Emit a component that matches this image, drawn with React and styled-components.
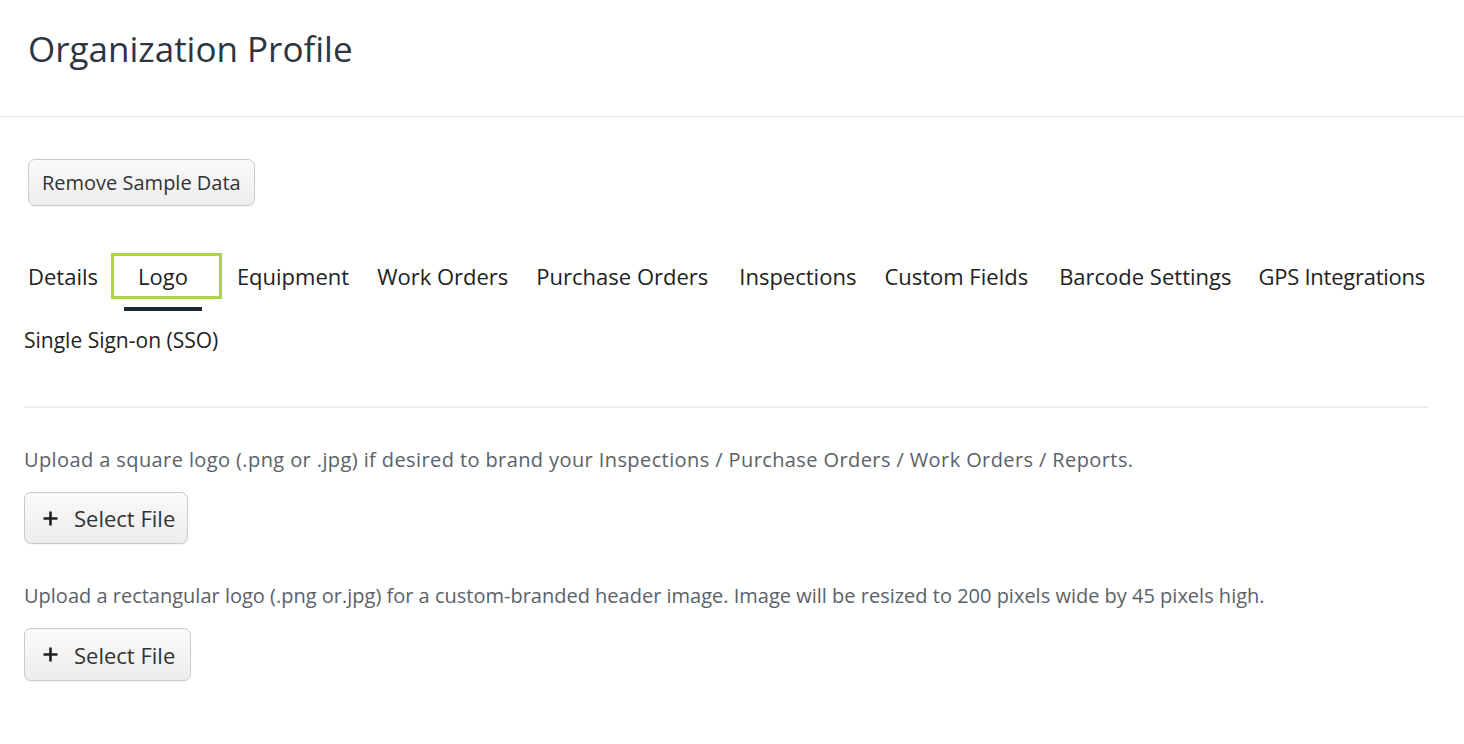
import React from 'react';
import styled, { createGlobalStyle } from 'styled-components';

const GlobalStyle = createGlobalStyle`
  html, body {
    margin: 0;
    padding: 0;
    background: #ffffff;
    font-family: "Open Sans", "Noto Sans", Arial, sans-serif;
  }
`;

const Page = styled.div`
  width: 1464px;
  min-height: 744px;
  background: #fff;
`;

const Header = styled.header`
  height: 117px;
  border-bottom: 1px solid #e3e4e6;
  display: flex;
  align-items: center;
  padding: 0 28px 20px;
  box-sizing: border-box;

  h1 {
    margin: 0;
    font-size: 35px;
    font-weight: 400;
    color: #2c3540;
  }
`;

const Content = styled.main`
  padding: 42px 36px 0 24px;
`;

const Button = styled.button`
  display: inline-flex;
  align-items: center;
  gap: ${(p) => p.$gap || 10}px;
  height: ${(p) => p.$h || 47}px;
  padding: 0 ${(p) => p.$pr || 13}px 0 ${(p) => p.$pl || 13}px;
  margin-left: ${(p) => p.$ml || 0}px;
  border: 1px solid #c9cacc;
  border-radius: 7px;
  background: linear-gradient(#fafafa, #ededed);
  box-shadow: 0 1px 1px rgba(0, 0, 0, 0.05);
  font-family: inherit;
  font-size: ${(p) => p.$fs || 20}px;
  color: #333;
  cursor: pointer;
  box-sizing: border-box;
`;

const Tabs = styled.nav`
  display: flex;
  flex-wrap: wrap;
  margin: 41px 0 0 -10px;
  width: 1440px;
`;

const Tab = styled.div`
  position: relative;
  padding: 14px 14px 16px;
  line-height: 30px;
  font-size: ${(p) => p.$fs || 22}px;
  letter-spacing: ${(p) => p.$ls || 0}px;
  color: #222;
  border-bottom: 4px solid ${(p) => (p.$active ? '#1d2730' : 'transparent')};
  margin: 0 ${(p) => p.$mr || 0}px 0 ${(p) => p.$ml || 0}px;
  white-space: nowrap;
  cursor: pointer;

  ${(p) =>
    p.$highlight &&
    `
    &::before {
      content: '';
      position: absolute;
      left: -13px;
      right: -20px;
      top: 6px;
      height: 46px;
      border: 3px solid #aed443;
      box-sizing: border-box;
    }
  `}
`;

const Divider = styled.hr`
  border: 0;
  border-top: 2px solid #ececed;
  margin: 31px 0 0;
`;

const Note = styled.p`
  margin: ${(p) => p.$mt}px 0 18px;
  font-size: 20px;
  line-height: 28px;
  letter-spacing: ${(p) => p.$ls || 0}px;
  color: #5b6168;
`;

const Plus = () => (
  <svg width="15" height="15" viewBox="0 0 15 15">
    <path d="M7.5 0.5v14M0.5 7.5h14" stroke="#222" strokeWidth="2.6" />
  </svg>
);

const tabs = [
  { label: 'Details' },
  { label: 'Logo', active: true, highlight: true, ml: 12, mr: 21 },
  { label: 'Equipment' },
  { label: 'Work Orders' },
  { label: 'Purchase Orders' },
  { label: 'Inspections', ml: 3 },
  { label: 'Custom Fields' },
  { label: 'Barcode Settings', ml: 3 },
  { label: 'GPS Integrations', ml: -1, ls: -0.25 },
  { label: 'Single Sign-on (SSO)', ml: -4, fs: 21 },
];

export default function App() {
  return (
    <Page>
      <GlobalStyle />
      <Header>
        <h1>Organization Profile</h1>
      </Header>
      <Content>
        <Button $ml={4}>Remove Sample Data</Button>
        <Tabs>
          {tabs.map((t) => (
            <Tab
              key={t.label}
              $active={t.active}
              $highlight={t.highlight}
              $ml={t.ml}
              $mr={t.mr}
              $fs={t.fs}
              $ls={t.ls}
            >
              {t.label}
            </Tab>
          ))}
        </Tabs>
        <Divider />
        <Note $mt={38} $ls={0.4}>
          Upload a square logo (.png or .jpg) if desired to brand your Inspections / Purchase Orders / Work Orders / Reports.
        </Note>
        <Button $h={52} $pl={18} $pr={12} $gap={16} $fs={22}>
          <Plus /> Select File
        </Button>
        <Note $mt={38}>
          Upload a rectangular logo (.png or.jpg) for a custom-branded header image. Image will be resized to 200 pixels wide by 45 pixels high.
        </Note>
        <Button $h={53} $pl={18} $pr={15} $gap={16} $fs={22}>
          <Plus /> Select File
        </Button>
      </Content>
    </Page>
  );
}
